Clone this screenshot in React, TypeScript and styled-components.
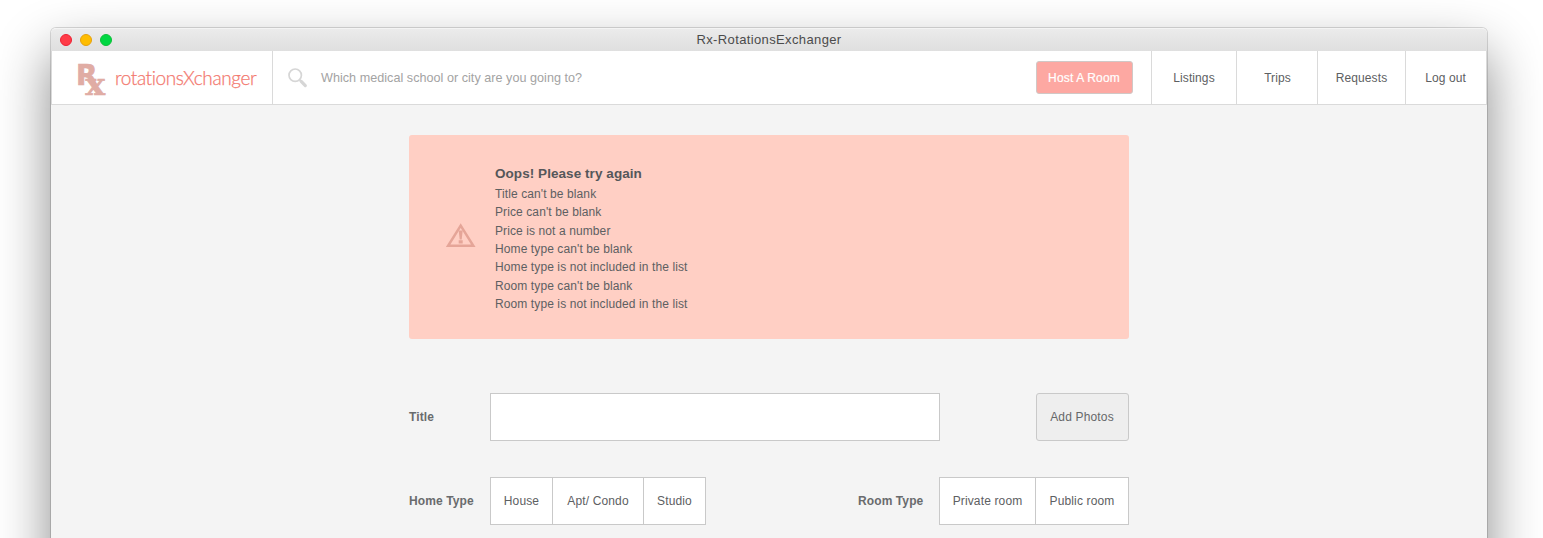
import React from "react";
import styled, { createGlobalStyle } from "styled-components";

const GlobalStyle = createGlobalStyle`
  * { box-sizing: border-box; }
  html, body { margin: 0; background: #fff; overflow: hidden; }
  body {
    font-family: "Liberation Sans", Arial, sans-serif;
    font-size: 12px;
    letter-spacing: 0.1px;
    color: #5d6062;
  }
`;

const Desktop = styled.div`
  height: 538px;
  padding: 28px 56px 0 51px;
  overflow: hidden;
`;

const Window = styled.div`
  height: 760px;
  background: #f4f4f4;
  border-radius: 5px 5px 0 0;
  box-shadow: 0 0 0 1px rgba(0, 0, 0, 0.14), 0 25px 54px rgba(0, 0, 0, 0.47);
`;

const TitleBar = styled.header`
  position: relative;
  display: flex;
  align-items: center;
  justify-content: center;
  height: 23px;
  padding-bottom: 2px;
  background: linear-gradient(#ebebeb, #dfdfdf);
  border-top: 1px solid #f4f4f4;
  border-radius: 5px 5px 0 0;
  font-size: 13px;
  letter-spacing: 0.37px;
  color: #4b4b4b;
`;

const Lights = styled.div`
  position: absolute;
  left: 9px;
  top: 5px;
  display: flex;
  gap: 8px;
`;

const Light = styled.span<{ $fill: string; $edge: string }>`
  width: 12px;
  height: 12px;
  border-radius: 50%;
  background: ${(p) => p.$fill};
  border: 1px solid ${(p) => p.$edge};
`;

const NavBar = styled.nav`
  display: flex;
  height: 54px;
  background: #fff;
  border: 1px solid #dadada;
  border-top: 0;
`;

const Brand = styled.div`
  display: flex;
  align-items: center;
  width: 221px;
  padding-left: 23px;
  border-right: 1px solid #dadada;
`;

const BrandMark = styled.svg`
  width: 34px;
  height: 46px;
  margin-right: 6px;
  overflow: visible;
  letter-spacing: 0;
`;

const BrandName = styled.span`
  font-family: Lato, sans-serif;
  font-weight: 300;
  font-size: 19px;
  letter-spacing: -0.41px;
  color: #f3796f;
  -webkit-text-stroke: 0.25px #f3796f;
`;

const Search = styled.div`
  flex: 1;
  display: flex;
  align-items: center;
  padding-left: 15px;
  font-size: 12.6px;
  letter-spacing: 0.03px;
  color: #a3a3a3;
`;

const SearchIcon = styled.svg`
  width: 20px;
  height: 20px;
  margin-right: 13px;
`;

const HostButton = styled.button`
  width: 97px;
  height: 33px;
  margin: 10px 18px 0 0;
  padding: 0 1px 0 0;
  border: 1px solid #d0c8c6;
  border-radius: 3px;
  background: #fda8a2;
  color: #fff;
  font: inherit;
  letter-spacing: 0.16px;
  -webkit-text-stroke: 0.2px #fff;
`;

const NavLink = styled.a<{ $width: number; $shift?: number }>`
  display: flex;
  align-items: center;
  justify-content: center;
  width: ${(p) => p.$width}px;
  padding-left: ${(p) => Math.max(p.$shift ?? 0, 0)}px;
  padding-right: ${(p) => Math.max(-(p.$shift ?? 0), 0)}px;
  border-left: 1px solid #dadada;
`;

const Content = styled.main`
  width: 720px;
  margin: 30px auto 0;
`;

const Alert = styled.section`
  display: flex;
  align-items: center;
  height: 204px;
  padding-left: 37px;
  border-radius: 3px;
  background: #ffcfc4;
`;

const AlertIcon = styled.svg`
  width: 30px;
  height: 25px;
  margin: 0 19px 3px 0;
`;

const AlertBody = styled.div`
  padding-top: 3.9px;
`;

const AlertTitle = styled.h2`
  margin: 0 0 2.3px;
  font-size: 13.5px;
  line-height: 18px;
  letter-spacing: 0.06px;
  color: #55575a;
`;

const ErrorList = styled.ul`
  margin: 0;
  padding: 0;
  list-style: none;
  line-height: 18.3px;
`;

const FormRow = styled.div<{ $gap: number }>`
  display: flex;
  align-items: center;
  height: 48px;
  margin-top: ${(p) => p.$gap}px;
`;

const Label = styled.label`
  width: 81px;
  font-weight: bold;
  color: #696b6d;
`;

const TitleInput = styled.input`
  width: 450px;
  height: 48px;
  border: 1px solid #c9c9c9;
  background: #fff;
`;

const PhotoButton = styled.button`
  width: 93px;
  height: 48px;
  margin-left: auto;
  padding: 0 1px 0 0;
  border: 1px solid #c9c9c9;
  border-radius: 3px;
  background: #eee;
  color: #66686a;
  font: inherit;
  letter-spacing: 0.16px;
`;

const Segments = styled.div`
  display: flex;
  height: 48px;
  border: 1px solid #c9c9c9;
  background: #fff;
`;

const Segment = styled.span<{ $width: number }>`
  display: flex;
  align-items: center;
  justify-content: center;
  width: ${(p) => p.$width}px;
  letter-spacing: 0.14px;
  & + & { border-left: 1px solid #c9c9c9; }
`;

const RoomGroup = styled.div`
  display: flex;
  align-items: center;
  margin-left: auto;
`;

const errors = [
  "Title can't be blank",
  "Price can't be blank",
  "Price is not a number",
  "Home type can't be blank",
  "Home type is not included in the list",
  "Room type can't be blank",
  "Room type is not included in the list",
];

export default function App() {
  return (
    <Desktop>
      <GlobalStyle />
      <Window>
        <TitleBar>
          <Lights>
            <Light $fill="#ff3b47" $edge="#ee2032" />
            <Light $fill="#ffbd00" $edge="#e6a10c" />
            <Light $fill="#00d742" $edge="#0cc038" />
          </Lights>
          Rx-RotationsExchanger
        </TitleBar>
        <NavBar>
          <Brand>
            <BrandMark viewBox="0 0 34 46" fill="#e0aca4" stroke="#e0aca4" strokeWidth="0.7" fontWeight="bold">
              <text x="1" y="29.5" fontFamily="DejaVu Sans" fontSize="28.5" textLength="21.5" lengthAdjust="spacingAndGlyphs">R</text>
              <text x="10.5" y="39.5" fontFamily="DejaVu Serif" fontSize="29" textLength="19.5" lengthAdjust="spacingAndGlyphs">x</text>
            </BrandMark>
            <BrandName>rotationsXchanger</BrandName>
          </Brand>
          <Search>
            <SearchIcon viewBox="0 0 20 20" fill="none" stroke="#d6d6d6">
              <circle cx="7.2" cy="7.2" r="6.2" strokeWidth="1.7" />
              <path d="M11.6 12 13.2 13.4" strokeWidth="1.8" />
              <path d="M13.2 13.4 17.3 17.6" strokeWidth="3.2" strokeLinecap="round" />
            </SearchIcon>
            Which medical school or city are you going to?
          </Search>
          <HostButton>Host A Room</HostButton>
          <NavLink $width={85}>Listings</NavLink>
          <NavLink $width={81} $shift={1}>Trips</NavLink>
          <NavLink $width={88}>Requests</NavLink>
          <NavLink $width={81} $shift={-1}>Log out</NavLink>
        </NavBar>
        <Content>
          <Alert>
            <AlertIcon viewBox="0 0 30 25" fill="none" stroke="#e5a598">
              <path d="M14.7 2.6 27.3 22.8H2.1Z" strokeWidth="2.5" />
              <path d="M12.7 7.5h4l-1 9h-2zM12.7 17.2h4v3.4h-4z" fill="#e5a598" stroke="none" />
            </AlertIcon>
            <AlertBody>
              <AlertTitle>Oops! Please try again</AlertTitle>
              <ErrorList>
                {errors.map((e) => <li key={e}>{e}</li>)}
              </ErrorList>
            </AlertBody>
          </Alert>
          <FormRow $gap={54}>
            <Label>Title</Label>
            <TitleInput />
            <PhotoButton>Add Photos</PhotoButton>
          </FormRow>
          <FormRow $gap={36}>
            <Label>Home Type</Label>
            <Segments>
              <Segment $width={61}>House</Segment>
              <Segment $width={91}>Apt/ Condo</Segment>
              <Segment $width={62}>Studio</Segment>
            </Segments>
            <RoomGroup>
              <Label>Room Type</Label>
              <Segments>
                <Segment $width={95}>Private room</Segment>
                <Segment $width={93}>Public room</Segment>
              </Segments>
            </RoomGroup>
          </FormRow>
        </Content>
      </Window>
    </Desktop>
  );
}
